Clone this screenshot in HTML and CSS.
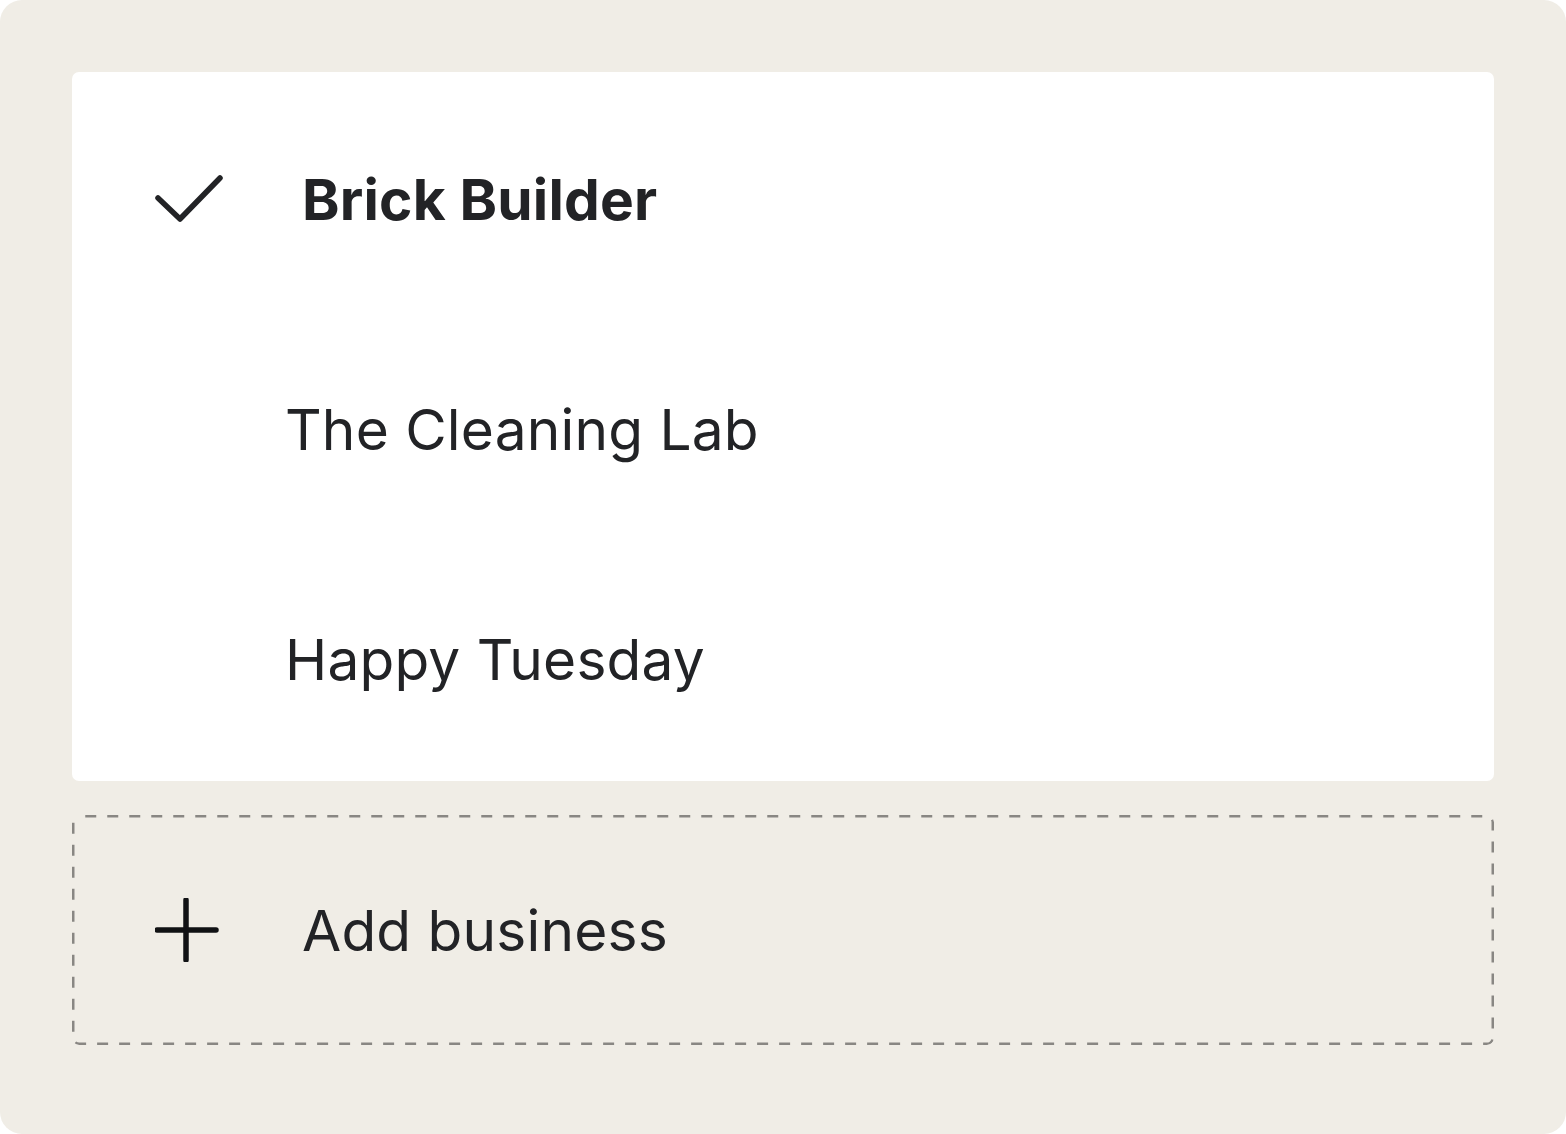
FILE: index.html
```html
<!DOCTYPE html>
<html lang="en">
  <head>
    <meta charset="UTF-8" />
    <meta name="viewport" content="width=device-width, initial-scale=1.0" />
    <title>Switch business</title>
    <link rel="stylesheet" href="styles.css">
  </head>
  <body>
    <div class="frame">
      <div class="list">
        <div class="item selected">
          <span class="icon">
            <svg width="68" height="48" viewBox="0 0 68 48" fill="none">
              <path d="M3 23 L25 44 L65 3" stroke="#222326" stroke-width="5.5" stroke-linecap="round" stroke-linejoin="round" />
            </svg>
          </span>
          <span class="name">Brick Builder</span>
        </div>
        <div class="item">
          <span class="name">The Cleaning Lab</span>
        </div>
        <div class="item">
          <span class="name">Happy Tuesday</span>
        </div>
      </div>
      <div class="add">
        <span class="icon">
          <svg width="68" height="64" viewBox="0 0 68 64" fill="none">
            <path d="M31 2 V62 M2 32 H61" stroke="#111214" stroke-width="5.5" stroke-linecap="round" />
          </svg>
        </span>
        <span class="name">Add business</span>
      </div>
    </div>
  </body>
</html>
```

FILE: styles.css
```css
html, body {
  margin: 0;
  background: #fff;
}
.frame {
  box-sizing: border-box;
  width: 1566px;
  height: 1134px;
  padding: 72px 72px 0;
  background: #f0ede6;
  border-radius: 22px;
  font-family: Inter, "Noto Sans", sans-serif;
  color: #222326;
}
.list {
  background: #fff;
  border-radius: 7px;
  padding: 12px 0 7px;
}
.item {
  display: flex;
  align-items: center;
  height: 230px;
  padding-left: 213px;
}
.item .name {
  font-size: 56.8px;
  letter-spacing: 0.2px;
}
.item.selected {
  padding-left: 83px;
}
.item.selected .name {
  font-weight: 700;
  margin-left: 79px;
}
.icon {
  display: flex;
  width: 68px;
}
.add {
  display: flex;
  align-items: center;
  height: 230px;
  margin-top: 34px;
  padding-left: 83px;
  background-image: url("data:image/svg+xml,%3Csvg xmlns='http://www.w3.org/2000/svg' width='100%25' height='100%25'%3E%3Crect x='1.25' y='1.25' width='calc(100%25 - 2.5px)' height='calc(100%25 - 2.5px)' rx='6' fill='none' stroke='%23898783' stroke-width='2.5' stroke-dasharray='11 11' stroke-dashoffset='-6'/%3E%3C/svg%3E");
  border-radius: 7px;
}
.add .name {
  font-size: 56.8px;
  margin-left: 79px;
  letter-spacing: 0.2px;
}
```
